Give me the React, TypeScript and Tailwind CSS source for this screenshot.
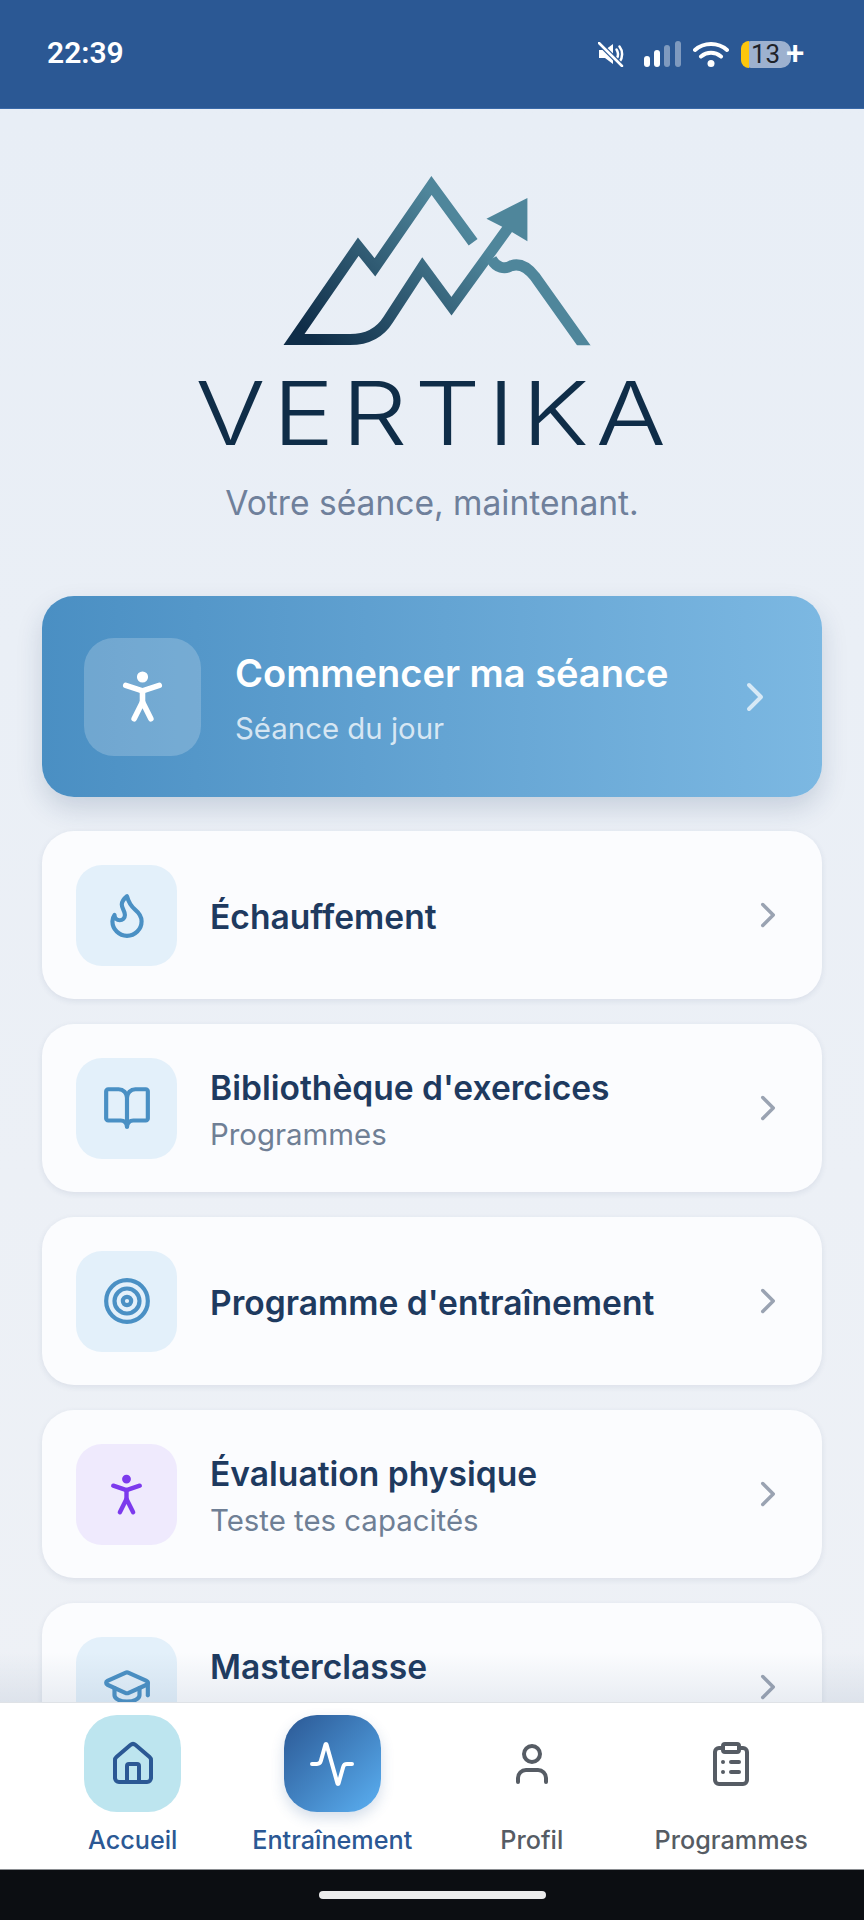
import React from "react";
import {
  Activity,
  BookOpen,
  ChevronRight,
  ClipboardList,
  Flame,
  GraduationCap,
  House,
  PersonStanding,
  Target,
  User,
} from "lucide-react";

const menuItems = [
  { title: "Échauffement", icon: Flame },
  { title: "Bibliothèque d'exercices", subtitle: "Programmes", icon: BookOpen },
  { title: "Programme d'entraînement", icon: Target },
  {
    title: "Évaluation physique",
    subtitle: "Teste tes capacités",
    icon: PersonStanding,
    purple: true,
  },
  { title: "Masterclasse", subtitle: "Les cours vidéo détaillés", icon: GraduationCap },
];

const StatusBar = () => (
  <div className="h-[109px] shrink-0 bg-[#2b5894] border-b border-[#3a69a8] flex items-center justify-between pl-[47px] pr-[61px] pb-[3px]">
    <span className="text-[30px] font-semibold text-white leading-none font-['Roboto',sans-serif]">22:39</span>
    <div className="flex items-center mt-[3px] mr-[12px]">
      {/* mute */}
      <svg width="26" height="25" viewBox="0 0 26 25" className="text-white">
        <path d="M1 8h6l8-6v20l-8-6H1z" fill="currentColor" />
        <path d="M18.500 7.500c2 3 2 6.500 0 9.500M21.500 4.500c3.500 4.500 3.500 11 0 15.500" fill="none" stroke="currentColor" strokeWidth="2.500" strokeLinecap="round" />
        <path d="M1 1l23 23" stroke="#2b5894" strokeWidth="5" />
        <path d="M1 1l23 23" stroke="currentColor" strokeWidth="2.500" strokeLinecap="round" />
      </svg>
      {/* signal */}
      <svg width="37" height="26" viewBox="0 0 37 26" className="ml-[20px]">
        <rect x="0" y="15" width="6" height="11" rx="3" fill="#fff" />
        <rect x="10" y="9" width="6" height="17" rx="3" fill="#fff" />
        <rect x="20" y="4" width="6" height="22" rx="3" fill="#fff" fillOpacity="0.4" />
        <rect x="31" y="0" width="6" height="26" rx="3" fill="#fff" fillOpacity="0.4" />
      </svg>
      {/* wifi */}
      <svg width="36" height="26" viewBox="0 0 36 26" className="ml-[12px]">
        <path d="M2 9c9-8 23-8 32 0M8 15.500c6-5 14-5 20 0" fill="none" stroke="#fff" strokeWidth="4" strokeLinecap="round" />
        <circle cx="18" cy="22.500" r="3.500" fill="#fff" />
      </svg>
      {/* battery */}
      <div className="relative ml-[12px] flex items-center">
        <div className="w-[50px] h-[27px] rounded-[10px] bg-[#9db1cf] overflow-hidden flex items-center justify-center">
          <div className="absolute left-0 top-0 h-[27px] w-[8px] rounded-l-[10px] bg-[#fdc70c]" />
          <span className="text-[26px] leading-none text-[#1e2229] font-['Roboto',sans-serif] pl-[3px] pr-[4px]">13</span>
        </div>
        <span className="absolute left-[45px] top-[-4px] text-[33px] font-medium leading-[33px] text-white font-['Roboto',sans-serif]">+</span>
      </div>
    </div>
  </div>
);

const LogoMark = () => (
  <svg width="313" height="175" viewBox="300 40 940 525" fill="none" className="ml-[8px]">
    <defs>
      <linearGradient id="vertikaGrad" gradientUnits="userSpaceOnUse" x1="420" y1="560" x2="820" y2="170">
        <stop offset="0" stopColor="#0f2d48" />
        <stop offset="1" stopColor="#4f869b" />
      </linearGradient>
      <clipPath id="vertikaClip">
        <rect x="300" y="40" width="940" height="517" />
      </clipPath>
    </defs>
    <path
      d="M880 248L755 77L585 323L535 261L342 540H510C560 540 600 520 625 480L728 322L815 440L985 205"
      stroke="url(#vertikaGrad)"
      strokeWidth="33"
      strokeMiterlimit="8"
    />
    <path
      d="M935 298C950 325 975 330 995 318C1020 310 1045 325 1065 350L1225 575"
      stroke="#4f869b"
      strokeWidth="33"
      clipPath="url(#vertikaClip)"
    />
    <path d="M1043 115L920 177L985 210L1043 245Z" fill="#4f869b" />
  </svg>
);

const HeroCard = () => (
  <div className="h-[201px] rounded-[32px] bg-gradient-to-r from-[#4a8fc3] to-[#7cb8e2] shadow-[0_12px_26px_rgba(30,60,100,0.17)] flex items-center pl-[42px] pr-[43px]">
    <div className="w-[117px] h-[118px] shrink-0 rounded-[30px] bg-white/20 flex items-center justify-center">
      <PersonStanding size={67} color="#fff" strokeWidth={2} />
    </div>
    <div className="ml-[34px] flex-1 pt-[3px]">
      <div className="text-[38px] leading-[46px] font-semibold text-white">Commencer ma séance</div>
      <div className="mt-[15px] text-[29.4px] leading-[36px] text-white/75">Séance du jour</div>
    </div>
    <ChevronRight size={48} color="#fff" strokeOpacity={0.7} />
  </div>
);

const MenuCard = ({ item }: { item: (typeof menuItems)[number] }) => {
  const Icon = item.icon;
  return (
    <div className="h-[168px] shrink-0 rounded-[32px] bg-[#fbfcfe] shadow-[0_2px_6px_rgba(30,60,100,0.09)] flex items-center pl-[34px] pr-[33px]">
      <div
        className={`w-[101px] h-[101px] shrink-0 rounded-[26px] flex items-center justify-center ${
          item.purple ? "bg-[#efeafd]" : "bg-[#e3f0fa]"
        }`}
      >
        {item.purple ? (
          <Icon size={53} color="#7c3aed" />
        ) : (
          <Icon size={50} color="#4a90c4" />
        )}
      </div>
      <div className="ml-[33px] flex-1 pt-[3px]">
        <div className="text-[33.6px] leading-[42px] font-semibold text-[#1e3a5f]">{item.title}</div>
        {item.subtitle && (
          <div className="mt-[8px] text-[29.4px] leading-[36px] text-[#6f7f95]">{item.subtitle}</div>
        )}
      </div>
      <ChevronRight size={42} color="#9aa3b2" />
    </div>
  );
};

const navItems = [
  { label: "Accueil", icon: House, state: "home" },
  { label: "Entraînement", icon: Activity, state: "active" },
  { label: "Profil", icon: User, state: "" },
  { label: "Programmes", icon: ClipboardList, state: "" },
];

const BottomNav = () => (
  <div className="h-[167px] shrink-0 bg-white border-t border-[#dfe2e6] grid grid-cols-4 px-[33px] pt-[12px] relative">
    {navItems.map((item) => {
      const Icon = item.icon;
      const blue = item.state !== "";
      return (
        <div key={item.label} className="flex flex-col items-center">
          <div
            className={`w-[97px] h-[97px] rounded-[33px] flex items-center justify-center ${
              item.state === "home"
                ? "bg-[#bde5ef]"
                : item.state === "active"
                  ? "bg-gradient-to-br from-[#2b5894] to-[#5bb0f2] shadow-[0_6px_14px_rgba(43,88,148,0.2)]"
                  : ""
            }`}
          >
            <Icon size={48} color={item.state === "active" ? "#fff" : item.state === "home" ? "#2b5894" : "#565c64"} />
          </div>
          <span
            className={`mt-[12px] text-[25.2px] leading-[32px] font-medium whitespace-nowrap ${
              blue ? "text-[#2b5894]" : "text-[#565c64]"
            }`}
          >
            {item.label}
          </span>
        </div>
      );
    })}
  </div>
);

export default function App() {
  return (
    <div className="w-[864px] h-[1920px] flex flex-col overflow-hidden font-['Inter',sans-serif]">
      <StatusBar />
      <main className="relative flex-1 min-h-0 overflow-hidden bg-gradient-to-b from-[#e8eef6] to-[#eef1f6]">
        <div className="flex flex-col items-center pt-[64px]">
          <LogoMark />
          <div className="mt-[12px] ml-[5px] text-[88px] leading-[106px] font-[350] tracking-[6px] scale-x-[1.18] text-[#0f2d48]">VERTIKA</div>
          <div className="mt-[17px] text-[33.6px] leading-[40px] text-[#6f809b]">Votre séance, maintenant.</div>
        </div>
        <div className="mt-[73px] px-[42px] flex flex-col gap-[25px]">
          <div className="mb-[9px]">
            <HeroCard />
          </div>
          {menuItems.map((item) => (
            <MenuCard key={item.title} item={item} />
          ))}
        </div>
        <div className="absolute left-0 right-0 bottom-0 h-[50px] bg-gradient-to-t from-[#46648c]/10 to-transparent" />
      </main>
      <BottomNav />
      <div className="h-[51px] shrink-0 bg-[#0c0e12] border-t border-[#8a8d91] flex items-center justify-center">
        <div className="w-[227px] h-[8px] rounded-full bg-[#ececec]" />
      </div>
    </div>
  );
}
